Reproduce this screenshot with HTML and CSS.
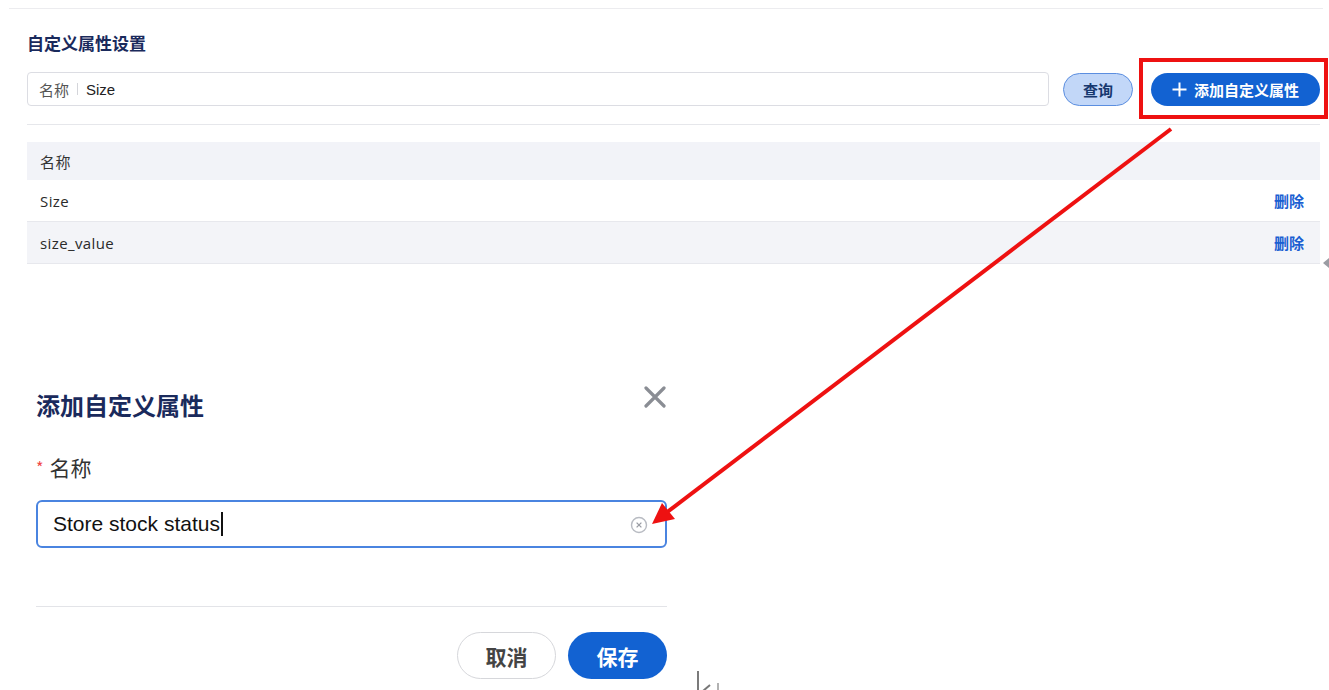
FILE: index.html
```html
<!DOCTYPE html>
<html lang="zh-CN">
<head>
    <meta charset="UTF-8">
    <meta name="viewport" content="width=device-width, initial-scale=1.0">
    <title>自定义属性设置</title>
    <link rel="stylesheet" href="styles.css">
</head>
<body>
    <div class="top-line"></div>

    <div class="panel">
        <h2 class="panel-title">自定义属性设置</h2>
        <div class="toolbar">
            <div class="search-box">
                <span class="search-label">名称</span>
                <span class="search-sep"></span>
                <span class="search-value">Size</span>
            </div>
            <button class="btn-query">查询</button>
            <button class="btn-add">
                <svg class="plus" width="15" height="15" viewBox="0 0 15 15">
                    <path d="M7.5 0.5 V14.5 M0.5 7.5 H14.5" stroke="#fff" stroke-width="2"/>
                </svg>添加自定义属性
            </button>
        </div>
        <div class="divider"></div>

        <div class="attr-table">
            <div class="attr-row attr-head"><span>名称</span></div>
            <div class="attr-row"><span>Size</span><a class="del-link">删除</a></div>
            <div class="attr-row attr-alt"><span>size_value</span><a class="del-link">删除</a></div>
        </div>
    </div>

    <div class="dialog">
        <div class="dialog-head">
            <h3 class="dialog-title">添加自定义属性</h3>
            <svg class="dialog-close" width="22" height="22" viewBox="0 0 22 22">
                <path d="M2 2 L20 20 M20 2 L2 20" stroke="#8a8d94" stroke-width="3.2" stroke-linecap="round"/>
            </svg>
        </div>
        <div class="field-label"><span class="req">*</span>名称</div>
        <div class="field-input">
            <span class="field-text">Store stock status</span><span class="caret"></span>
            <svg class="clear-icon" width="18" height="18" viewBox="0 0 18 18">
                <circle cx="9" cy="9" r="7.5" fill="none" stroke="#b8bbc2" stroke-width="1.4"/>
                <path d="M6.6 6.6 L11.4 11.4 M11.4 6.6 L6.6 11.4" stroke="#9a9da4" stroke-width="1.3"/>
            </svg>
        </div>
        <div class="dialog-divider"></div>
        <div class="dialog-foot">
            <button class="btn-cancel">取消</button>
            <button class="btn-save">保存</button>
        </div>
    </div>

    <!-- annotation overlay -->
    <div class="mark-box"></div>
    <svg class="mark-arrow" width="1329" height="690" viewBox="0 0 1329 690">
        <line x1="1171" y1="129" x2="666" y2="513" stroke="#ee1111" stroke-width="4"/>
        <polygon points="652,524 662,503 675,519" fill="#ee1111"/>
    </svg>
    <svg class="side-tab" width="8" height="12" viewBox="0 0 8 12">
        <path d="M7 1 L1 6 L7 11 Z" fill="#9a9ca3"/>
    </svg>
    <svg class="mouse-cursor" width="30" height="22" viewBox="0 0 30 22">
        <path d="M1 0 L1 20" stroke="#222" stroke-width="1.2"/>
        <path d="M6 20 L13 14" stroke="#777" stroke-width="2"/>
        <path d="M21 12 L21 20" stroke="#999" stroke-width="1.5"/>
    </svg>
</body>
</html>
```

FILE: styles.css
```css
body {
    margin: 0;
    background: #ffffff;
    font-family: "Noto Sans", "Noto Sans CJK SC", sans-serif;
    color: #222;
    width: 1329px;
    height: 690px;
    overflow: hidden;
    position: relative;
}
.top-line {
    margin: 8px 6px 0 9px;
    border-top: 1px solid #ececef;
}
.panel {
    padding: 0 9px 0 27px;
}
.panel-title {
    margin: 24px 0 0;
    font-size: 17px;
    line-height: 20px;
    font-weight: 700;
    color: #1a2a5c;
    font-family: "Noto Sans CJK SC", sans-serif;
}
.toolbar {
    display: flex;
    align-items: center;
    margin-top: 19px;
}
.search-box {
    flex: 1;
    height: 32px;
    border: 1px solid #dcdde3;
    border-radius: 4px;
    display: flex;
    align-items: center;
    padding-left: 11px;
    font-size: 15px;
    font-family: "Liberation Sans", "Noto Sans CJK SC", sans-serif;
}
.search-label {
    color: #555;
}
.search-sep {
    width: 1px;
    height: 12px;
    background: #d4d5da;
    margin: 0 8px;
}
.search-value {
    color: #222;
}
.btn-query {
    margin-left: 14px;
    width: 70px;
    height: 33px;
    border: 1px solid #5b8ee0;
    border-radius: 17px;
    background: #c2d7f8;
    color: #17386f;
    font-weight: 700;
    font-size: 15px;
    font-family: "Noto Sans CJK SC", sans-serif;
    padding: 0;
}
.btn-add {
    margin-left: 18px;
    width: 169px;
    height: 33px;
    border: none;
    border-radius: 17px;
    background: #1262d2;
    color: #fff;
    font-weight: 700;
    font-size: 15px;
    font-family: "Noto Sans CJK SC", sans-serif;
    display: flex;
    align-items: center;
    justify-content: center;
    padding: 0;
}
.plus {
    margin-right: 7px;
}
.divider {
    margin-top: 18px;
    border-top: 1px solid #e6e7eb;
}
.attr-table {
    margin-top: 17px;
    font-size: 15px;
    font-family: "Open Sans", "Noto Sans CJK SC", sans-serif;
    color: #2a2a2a;
}
.attr-row {
    height: 41px;
    display: flex;
    align-items: center;
    justify-content: space-between;
    padding: 0 16px 0 13px;
    border-bottom: 1px solid #e7e8ed;
}
.attr-head {
    height: 38px;
    background: #f2f3f8;
    border-bottom: none;
    color: #333;
}
.attr-alt {
    background: #f3f4f8;
}
.attr-row span {
    letter-spacing: 0.4px;
}
.del-link {
    color: #1a5fd2;
    font-weight: 700;
    font-size: 15px;
    font-family: "Noto Sans CJK SC", sans-serif;
    cursor: pointer;
}
.dialog {
    margin: 118px 0 0 36px;
    width: 631px;
}
.dialog-head {
    display: flex;
    justify-content: space-between;
    align-items: flex-start;
}
.dialog-title {
    margin: 9px 0 0;
    font-size: 24px;
    line-height: 28px;
    font-weight: 700;
    color: #1a2a5c;
    font-family: "Noto Sans CJK SC", sans-serif;
}
.dialog-close {
    margin: 4px 1px 0 0;
}
.field-label {
    margin-top: 35px;
    font-size: 21px;
    line-height: 26px;
    color: #333;
    font-family: "Noto Sans CJK SC", sans-serif;
    display: flex;
    align-items: center;
}
.req {
    color: #f04848;
    font-size: 16px;
    margin-right: 6px;
}
.field-input {
    margin-top: 20px;
    height: 44px;
    border: 2px solid #4a84e0;
    border-radius: 6px;
    display: flex;
    align-items: center;
    padding: 0 17px 0 15px;
    font-family: "Liberation Sans", sans-serif;
    font-size: 21px;
    color: #111;
}
.caret {
    width: 2px;
    height: 24px;
    background: #111;
    margin-left: 1px;
}
.clear-icon {
    margin-left: auto;
    margin-top: 2px;
}
.dialog-divider {
    margin-top: 58px;
    border-top: 1px solid #e3e4e8;
}
.dialog-foot {
    margin-top: 25px;
    display: flex;
    justify-content: flex-end;
    gap: 12px;
}
.btn-cancel,
.btn-save {
    width: 99px;
    height: 47px;
    border-radius: 24px;
    font-size: 21px;
    font-weight: 700;
    font-family: "Noto Sans CJK SC", sans-serif;
    padding: 0;
}
.btn-cancel {
    background: #fff;
    border: 1px solid #d6d7db;
    color: #444;
}
.btn-save {
    background: #1262d2;
    border: none;
    color: #fff;
}
.mark-box {
    position: absolute;
    left: 1139px;
    top: 58px;
    width: 181px;
    height: 53px;
    border: 4px solid #ee1111;
}
.mark-arrow {
    position: absolute;
    left: 0;
    top: 0;
    pointer-events: none;
}
.side-tab {
    position: absolute;
    left: 1322px;
    top: 257px;
}
.mouse-cursor {
    position: absolute;
    left: 697px;
    top: 671px;
}
```
